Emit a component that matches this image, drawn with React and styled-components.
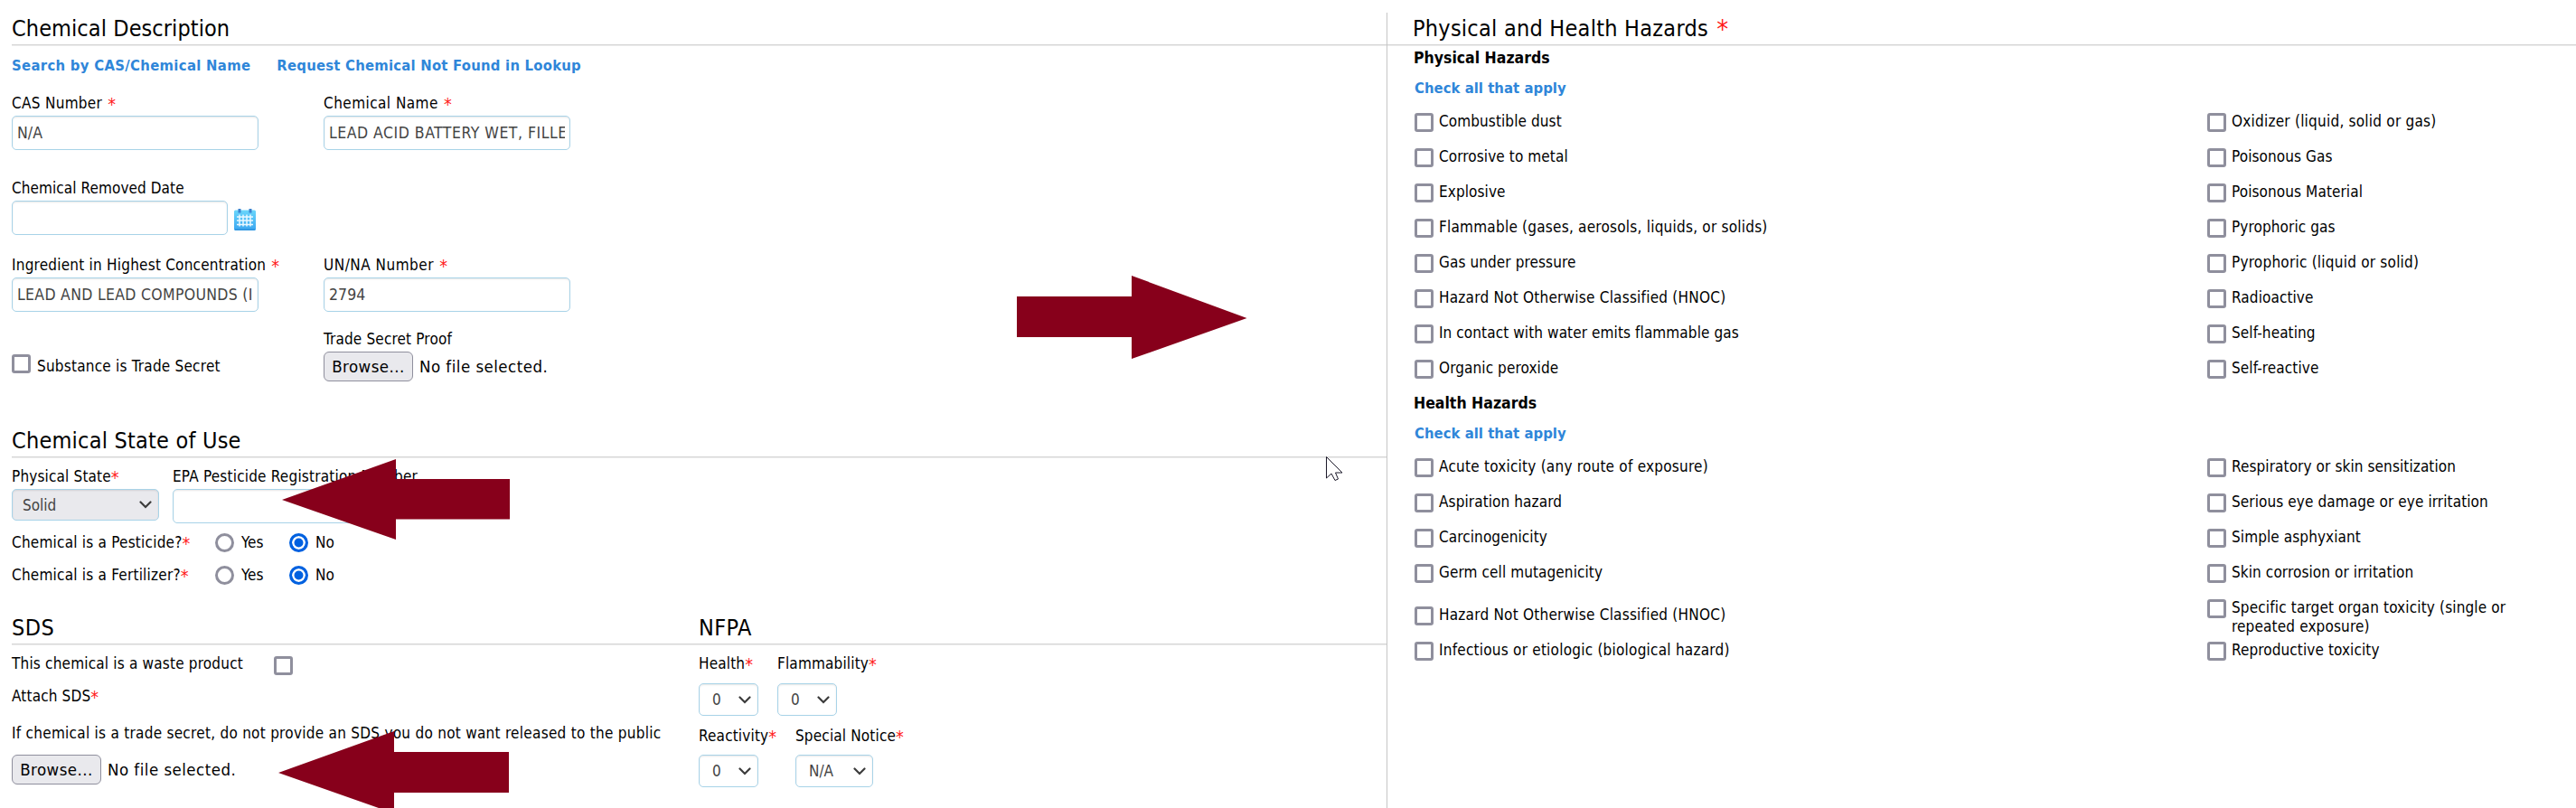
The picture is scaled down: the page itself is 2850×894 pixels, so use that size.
import React from "react";
import styled, { createGlobalStyle } from "styled-components";

const GlobalStyle = createGlobalStyle`
  * {
    box-sizing: border-box;
  }

  body {
    margin: 0;
    background: #fff;
    color: #000;
    font-family: "DejaVu Sans Condensed", "DejaVu Sans", sans-serif;
    font-size: 17px;
    line-height: 20px;
  }

  input {
    font-family: inherit;
    margin: 0;
  }
`;

const Page = styled.main`
  position: relative;
  display: flex;
  width: 2850px;
  height: 894px;
  padding-top: 14px;
  overflow: hidden;
`;

const FormPane = styled.section`
  width: 1534px;
  padding-left: 13px;
`;

const HazardPane = styled.section`
  flex: 1;
  border-left: 1px solid #c6c6c6;
`;

const SectionTitle = styled.h2`
  display: grid;
  grid-template-columns: ${(props) => props.$columns || "1fr"};
  height: 37px;
  margin: ${(props) => props.$top || 0}px 0 0;
  padding-left: ${(props) => props.$indent || 0}px;
  border-bottom: 1px solid #ebebeb;
  box-shadow: inset 0 -1px 0 #d6d6d6;
  font-size: 25px;
  font-weight: normal;
  line-height: 35px;
  letter-spacing: ${(props) => props.$track || 0.08}px;
`;

const Links = styled.nav`
  display: flex;
  gap: 29px;
  margin-top: 12px;
`;

const Link = styled.a`
  display: block;
  color: #2f86d9;
  font-size: 16.5px;
  font-weight: bold;
  white-space: nowrap;
  letter-spacing: ${(props) => props.$track || 0.05}px;
`;

const FieldRow = styled.div`
  display: grid;
  grid-template-columns: ${(props) => props.$columns || "345px 1fr"};
  margin-top: ${(props) => props.$top}px;
`;

const Field = styled.div`
  display: flex;
  flex-direction: column;
  align-items: flex-start;
  gap: ${(props) => props.$gap || 4}px;
`;

const Label = styled.label`
  height: 20px;
  white-space: nowrap;
  letter-spacing: ${(props) => props.$track || 0.16}px;
`;

const Star = styled.span`
  margin-left: ${(props) => props.$gap || 0}px;
  color: #ff1a1a;
  font-size: 1.15em;
  line-height: 0;
  vertical-align: -0.08em;
`;

const TextInput = styled.input`
  width: ${(props) => props.$width || 273}px;
  height: 38px;
  padding: 0 5px;
  border: 1px solid #a8d3e8;
  border-radius: 5px;
  outline: none;
  background: #fff;
  box-shadow: inset 0 1px 2px rgba(0, 0, 0, 0.1);
  color: #444;
  font-size: 17.5px;
  letter-spacing: ${(props) => props.$track || 0.1}px;
`;

const DateLine = styled.div`
  display: flex;
  align-items: center;
  gap: 7px;

  svg {
    margin-top: 4px;
  }
`;

const FileLine = styled.div`
  display: flex;
  align-items: center;
  gap: 7px;
  height: 33px;
  margin-top: ${(props) => props.$top || 0}px;
  font-size: 18.5px;
  letter-spacing: 0.48px;
`;

const BrowseButton = styled.button`
  width: 99px;
  height: 33px;
  padding: 0;
  border: 1px solid #8f8f9d;
  border-radius: 6px;
  background: #e9e9ed;
  color: #000;
  font: inherit;
  letter-spacing: inherit;
`;

const Checkbox = styled.input.attrs({ type: "checkbox" })`
  appearance: none;
  flex: none;
  width: 21px;
  height: 21px;
  border: 3px solid #8f8f9d;
  border-radius: 3px;
  background: #fff;
`;

const Radio = styled.input.attrs({ type: "radio" })`
  appearance: none;
  width: 21px;
  height: 21px;
  border: 3px solid #8f8f9d;
  border-radius: 50%;
  background: #fff;

  &:checked {
    border-color: #0061e0;
    background: #0061e0;
    box-shadow: inset 0 0 0 2.5px #fff;
  }
`;

const TradeSecret = styled.div`
  display: flex;
  gap: 7px;
  padding-top: 27px;

  label {
    margin-top: 3px;
  }
`;

const RadioRow = styled.div`
  display: grid;
  grid-template-columns: 225px 29px 53px 29px auto;
  height: 21px;
  margin-top: ${(props) => props.$top}px;
  line-height: 21px;
`;

const SelectBox = styled.div`
  display: flex;
  align-items: center;
  justify-content: space-between;
  width: ${(props) => props.$width}px;
  height: ${(props) => props.$height || 36}px;
  padding: 0 7px 0 ${(props) => props.$pad || 14}px;
  border: 1px solid #a8d3e8;
  border-radius: 5px;
  background: ${(props) => (props.$disabled ? "#e9e9ed" : "#fff")};
  box-shadow: inset 0 1px 2px rgba(0, 0, 0, 0.1);
  color: #444;
`;

const SdsGrid = styled.div`
  display: grid;
  grid-template-columns: 760px 1fr;
  padding-top: 10px;
`;

const Stack = styled.div`
  display: flex;
  flex-direction: column;
`;

const WasteRow = styled.div`
  display: grid;
  grid-template-columns: 290px auto;
  align-items: start;
  justify-content: start;
  height: 23px;

  input {
    margin-top: 2px;
  }
`;

const SpacedLabel = styled(Label)`
  margin-top: ${(props) => props.$top}px;
`;

const HazardGroup = styled.div`
  padding-left: 30px;
  margin-top: ${(props) => props.$top}px;
`;

const GroupName = styled.h3`
  height: 20px;
  margin: 0 0 14px -1px;
  font-size: 17.5px;
  line-height: 20px;
`;

const HazardGrid = styled.div`
  display: grid;
  grid-template-columns: 877px 1fr;
  row-gap: 18px;
  margin-top: 17px;
`;

const HazardItem = styled.div`
  display: flex;
  gap: 6px;
  align-self: ${(props) => (props.$low ? "end" : "start")};
  height: ${(props) => (props.$tall ? 29 : 21)}px;
`;

const HazardLabel = styled.label`
  max-width: 330px;
  margin-top: -1px;
  line-height: 21px;
  white-space: ${(props) => (props.$wrap ? "normal" : "nowrap")};
  letter-spacing: ${(props) => props.$track || 0.15}px;
`;

const Annotations = styled.svg`
  position: absolute;
  top: 0;
  left: 0;
  pointer-events: none;
`;

const physicalHazards = [
  ["Combustible dust", "Oxidizer (liquid, solid or gas)"],
  ["Corrosive to metal", "Poisonous Gas"],
  ["Explosive", "Poisonous Material"],
  ["Flammable (gases, aerosols, liquids, or solids)", "Pyrophoric gas"],
  ["Gas under pressure", "Pyrophoric (liquid or solid)"],
  ["Hazard Not Otherwise Classified (HNOC)", "Radioactive"],
  ["In contact with water emits flammable gas", "Self-heating"],
  ["Organic peroxide", "Self-reactive"],
];

const healthHazards = [
  ["Acute toxicity (any route of exposure)", "Respiratory or skin sensitization"],
  ["Aspiration hazard", "Serious eye damage or eye irritation"],
  ["Carcinogenicity", "Simple asphyxiant"],
  ["Germ cell mutagenicity", "Skin corrosion or irritation"],
  [
    "Hazard Not Otherwise Classified (HNOC)",
    "Specific target organ toxicity (single or repeated exposure)",
  ],
  ["Infectious or etiologic (biological hazard)", "Reproductive toxicity"],
];

const labelTrack = (text) => (text.includes("(") ? 0.23 : 0.1);

function CalendarIcon() {
  return (
    <svg width="24" height="24" viewBox="0 0 24 24">
      <defs>
        <linearGradient id="cal" x1="0" y1="0" x2="0" y2="1">
          <stop offset="0" stopColor="#6ad6fb" />
          <stop offset="1" stopColor="#3aa6f0" />
        </linearGradient>
      </defs>
      <rect x="0" y="1.5" width="24" height="22.5" rx="1.5" fill="url(#cal)" />
      <path d="M1 23h22" stroke="#2f93dc" strokeWidth="1.5" />
      <path d="M6 0v4.5M18 0v4.5" stroke="#3b82d0" strokeWidth="3" />
      <path
        d="M6 6.5v13M10 6.500v13M14 6.500v13M18 6.500v13M3 9h18M3 13h18M3 17.500h18"
        stroke="#e9f8ff"
        strokeWidth="1.5"
      />
    </svg>
  );
}

function Select({ value, ...props }) {
  return (
    <SelectBox {...props}>
      {value}
      <svg width="14" height="9" viewBox="0 0 14 9">
        <path
          d="M1.5 1.5 7 7l5.5-5.5"
          fill="none"
          stroke="#3c3c3c"
          strokeWidth="2.2"
          strokeLinecap="round"
        />
      </svg>
    </SelectBox>
  );
}

function FilePicker({ top }) {
  return (
    <FileLine $top={top}>
      <BrowseButton type="button">Browse...</BrowseButton>
      No file selected.
    </FileLine>
  );
}

function YesNo({ name, label, top }) {
  return (
    <RadioRow $top={top}>
      <Label $track={0.22}>
        {label}
        <Star>*</Star>
      </Label>
      <Radio name={name} />
      <span>Yes</span>
      <Radio name={name} defaultChecked />
      <span>No</span>
    </RadioRow>
  );
}

function Hazards({ title, items, top }) {
  return (
    <HazardGroup $top={top}>
      <GroupName>{title}</GroupName>
      <Link>Check all that apply</Link>
      <HazardGrid>
        {items.map(([left, right]) => {
          const tall = right.length > 40;
          return (
            <React.Fragment key={left}>
              <HazardItem $low={tall}>
                <Checkbox />
                <HazardLabel $track={labelTrack(left)}>{left}</HazardLabel>
              </HazardItem>
              <HazardItem $tall={tall}>
                <Checkbox />
                <HazardLabel $wrap={tall} $track={tall ? 0.15 : labelTrack(right)}>
                  {right}
                </HazardLabel>
              </HazardItem>
            </React.Fragment>
          );
        })}
      </HazardGrid>
    </HazardGroup>
  );
}

function App() {
  return (
    <Page>
      <GlobalStyle />
      <FormPane>
        <SectionTitle>Chemical Description</SectionTitle>
        <Links>
          <Link $track={0.32}>Search by CAS/Chemical Name</Link>
          <Link $track={0.23}>Request Chemical Not Found in Lookup</Link>
        </Links>
        <FieldRow $top={21}>
          <Field>
            <Label $track={0.3}>
              CAS Number <Star $gap={1}>*</Star>
            </Label>
            <TextInput defaultValue="N/A" />
          </Field>
          <Field>
            <Label $track={0.45}>
              Chemical Name <Star $gap={1}>*</Star>
            </Label>
            <TextInput $track={0.5} defaultValue="LEAD ACID BATTERY WET, FILLE" />
          </Field>
        </FieldRow>
        <FieldRow $top={32}>
          <Field>
            <Label $track={0.08}>Chemical Removed Date</Label>
            <DateLine>
              <TextInput $width={239} />
              <CalendarIcon />
            </DateLine>
          </Field>
        </FieldRow>
        <FieldRow $top={23}>
          <Field>
            <Label $track={0.22}>
              Ingredient in Highest Concentration <Star $gap={1}>*</Star>
            </Label>
            <TextInput $track={0.3} defaultValue="LEAD AND LEAD COMPOUNDS (I" />
          </Field>
          <Field>
            <Label $track={0.5}>
              UN/NA Number <Star $gap={1}>*</Star>
            </Label>
            <TextInput defaultValue="2794" />
          </Field>
        </FieldRow>
        <FieldRow $top={20}>
          <TradeSecret>
            <Checkbox />
            <Label $track={0.22}>Substance is Trade Secret</Label>
          </TradeSecret>
          <Field>
            <Label>Trade Secret Proof</Label>
            <FilePicker />
          </Field>
        </FieldRow>

        <SectionTitle $top={48} $track={0.22}>
          Chemical State of Use
        </SectionTitle>
        <FieldRow $top={10} $columns="178px 1fr">
          <Field>
            <Label>
              Physical State<Star>*</Star>
            </Label>
            <Select value="Solid" $width={163} $height={35} $pad={11} $disabled />
          </Field>
          <Field>
            <Label $track={0.2}>EPA Pesticide Registration Number</Label>
            <TextInput $width={238} />
          </Field>
        </FieldRow>
        <YesNo name="pesticide" label="Chemical is a Pesticide?" top={11} />
        <YesNo name="fertilizer" label="Chemical is a Fertilizer?" top={15} />

        <SectionTitle $top={30} $track={0.4} $columns="760px 1fr">
          <span>SDS</span>
          <span>NFPA</span>
        </SectionTitle>
        <SdsGrid>
          <Stack>
            <WasteRow>
              <Label $track={0.19}>This chemical is a waste product</Label>
              <Checkbox />
            </WasteRow>
            <SpacedLabel $top={13}>
              Attach SDS<Star>*</Star>
            </SpacedLabel>
            <SpacedLabel $top={21} $track={0.27}>
              If chemical is a trade secret, do not provide an SDS you do not want
              released to the public
            </SpacedLabel>
            <FilePicker top={14} />
          </Stack>
          <Stack>
            <FieldRow $top={0} $columns="87px 1fr">
              <Field $gap={12}>
                <Label>
                  Health<Star>*</Star>
                </Label>
                <Select value="0" $width={66} />
              </Field>
              <Field $gap={12}>
                <Label>
                  Flammability<Star>*</Star>
                </Label>
                <Select value="0" $width={66} />
              </Field>
            </FieldRow>
            <FieldRow $top={12} $columns="107px 1fr">
              <Field $gap={11}>
                <Label>
                  Reactivity<Star>*</Star>
                </Label>
                <Select value="0" $width={66} />
              </Field>
              <Field $gap={11}>
                <Label>
                  Special Notice<Star>*</Star>
                </Label>
                <Select value="N/A" $width={86} />
              </Field>
            </FieldRow>
          </Stack>
        </SdsGrid>
      </FormPane>

      <HazardPane>
        <SectionTitle $indent={28} $track={0.25}>
          <span>
            Physical and Health Hazards <Star $gap={2}>*</Star>
          </span>
        </SectionTitle>
        <Hazards title="Physical Hazards" items={physicalHazards} top={3} />
        <Hazards title="Health Hazards" items={healthHazards} top={17} />
      </HazardPane>

      <Annotations width="2850" height="894">
        <g fill="#87001b">
          <path d="M1125 328h127v-23l127.500 47-127.500 45v-24h-127z" />
          <path d="M564 530H438v-22l-126 45 126 44v-22.500h126z" />
          <path d="M563 832H436v-23l-128 46 128 45v-23h127z" />
        </g>
        <path
          d="M1467.500 505.500v23.500l5.500-5 4 7.500 3.500-1.500-3-7h7.500z"
          fill="#fff"
          stroke="#1c1a2a"
        />
      </Annotations>
    </Page>
  );
}

export default App;
